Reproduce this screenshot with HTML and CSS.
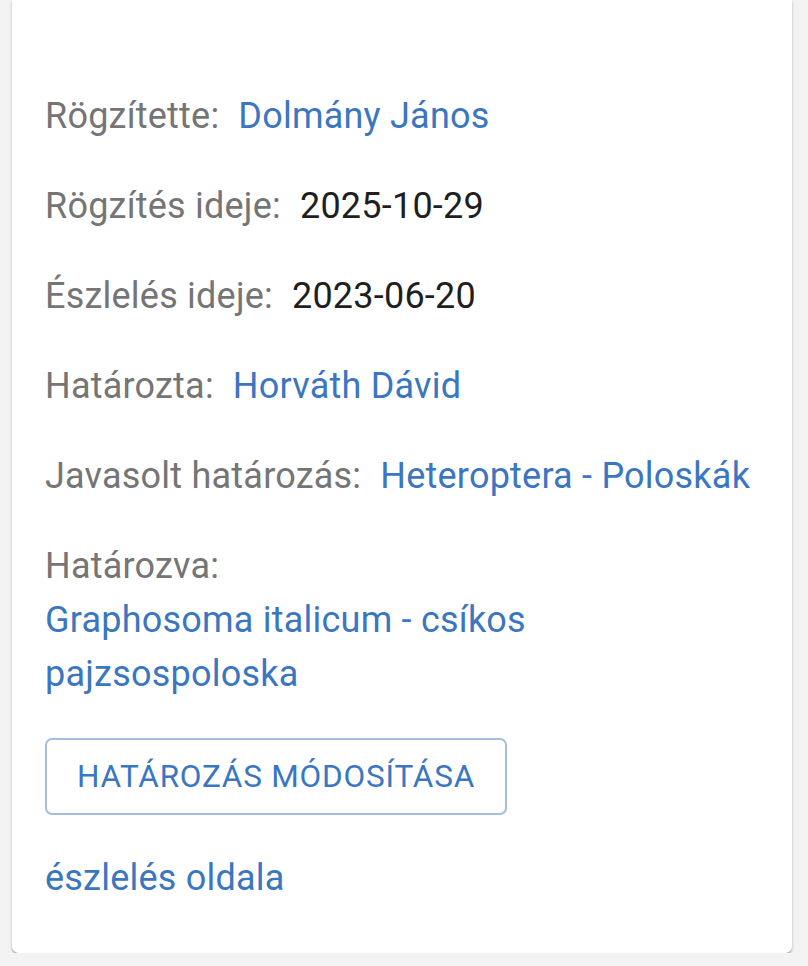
FILE: index.html
```html
<!DOCTYPE html>
<html lang="hu">
<head>
<meta charset="utf-8">
<link rel="stylesheet" href="styles.css">
</head>
<body>
<div class="card">
  <div class="row"><span class="label">Rögzítette:</span><a class="link">Dolmány János</a></div>
  <div class="row"><span class="label">Rögzítés ideje:</span><span class="value">2025-10-29</span></div>
  <div class="row"><span class="label">Észlelés ideje:</span><span class="value">2023-06-20</span></div>
  <div class="row"><span class="label">Határozta:</span><a class="link">Horváth Dávid</a></div>
  <div class="row"><span class="label">Javasolt határozás:</span><a class="link">Heteroptera - Poloskák</a></div>
  <div class="block">
    <div class="label">Határozva:</div>
    <a class="link">Graphosoma italicum - csíkos pajzsospoloska</a>
  </div>
  <button class="btn">Határozás módosítása</button>
  <div class="footer"><a class="link">észlelés oldala</a></div>
</div>
</body>
</html>
```
FILE: styles.css
```css
html, body {
  margin: 0;
  padding: 0;
  background: #f3f3f3;
}
body {
  padding: 0 16px 0 12px;
  font-family: Roboto, "Noto Sans", sans-serif;
  font-size: 36px;
  line-height: 54px;
  letter-spacing: 0.22px;
}
.card {
  background: #fff;
  border-radius: 0 0 7px 7px;
  box-shadow: 0 2px 2px rgba(0,0,0,0.25), 0 1px 5px rgba(0,0,0,0.08);
  padding: 89px 33px 48px 33px;
  height: 953px;
  box-sizing: border-box;
}
.row {
  display: flex;
  gap: 19px;
  margin-bottom: 36px;
}
.label {
  color: #757575;
}
.value {
  color: #1f1f1f;
}
.link {
  color: #3b76c1;
  text-decoration: none;
}
.block {
  width: 560px;
}
.btn {
  display: block;
  margin-top: 37px;
  height: 77px;
  box-sizing: border-box;
  padding: 0 30px 0 30px;
  background: #fff;
  border: 2px solid #a3bedf;
  border-radius: 7px;
  color: #3b76c1;
  font-family: Roboto, "Noto Sans", sans-serif;
  font-size: 31.5px;
  letter-spacing: 0.8px;
  text-transform: uppercase;
}
.footer {
  margin-top: 36px;
}
```
